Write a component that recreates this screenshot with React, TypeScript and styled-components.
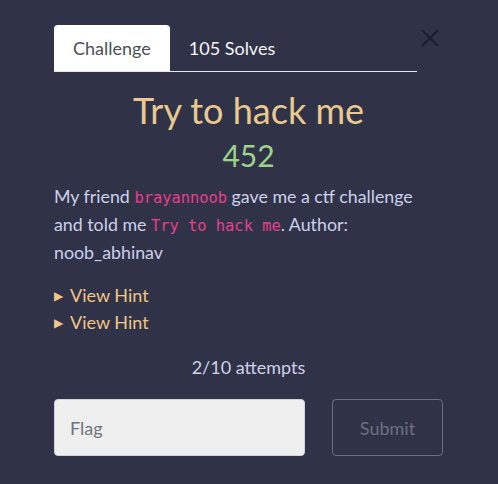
import React from "react";
import styled, { createGlobalStyle } from "styled-components";

const Global = createGlobalStyle`
  html, body { margin: 0; padding: 0; background: #303347; }
  body { font-family: Lato, "Noto Sans", sans-serif; }
  * { box-sizing: border-box; }
`;

const Page = styled.div`
  width: 498px;
  min-height: 484px;
  background: #303347;
  padding: 25px 55px 0 54px;
`;

const Header = styled.div`
  display: flex;
  align-items: flex-start;
`;

const Nav = styled.div`
  flex: 1;
  display: flex;
  border-bottom: 1px solid #e6e7ee;
`;

const Tab = styled.div<{ $active?: boolean }>`
  padding: 0 19px;
  height: 46px;
  display: flex;
  align-items: center;
  font-size: 18px;
  border-radius: 4px 4px 0 0;
  background: ${(p) => (p.$active ? "#ffffff" : "transparent")};
  color: ${(p) => (p.$active ? "#495057" : "#f4f5fa")};
`;

const Close = styled.div`
  width: 26px;
  height: 28px;
  display: flex;
  justify-content: center;
  align-items: center;
  margin-top: -1px;
`;

const Title = styled.h1`
  margin: 16px 0 0;
  text-align: center;
  font-weight: 400;
  font-size: 36px;
  line-height: 44px;
  color: #e9c98f;
`;

const Value = styled.div`
  text-align: center;
  font-size: 30px;
  line-height: 36px;
  margin-top: 5px;
  color: #9fd38c;
`;

const Desc = styled.p`
  margin: 9px 0 0;
  font-size: 17.8px;
  line-height: 28px;
  color: #cdd0ec;
`;

const Code = styled.code`
  font-family: "DejaVu Sans Mono", "Liberation Mono", monospace;
  font-size: 15.4px;
  line-height: 1;
  color: #e83e8c;
`;

const Hints = styled.div`
  margin-top: 16px;
  display: flex;
  flex-direction: column;
`;

const Hint = styled.div`
  display: flex;
  align-items: center;
  font-size: 18px;
  line-height: 27px;
  color: #f1c48a;
`;

const Arrow = styled.span`
  font-size: 12px;
  width: 16px;
  color: #f1c48a;
`;

const Attempts = styled.div`
  text-align: center;
  margin-top: 17px;
  font-size: 18px;
  line-height: 28px;
  color: #cdd0ec;
`;

const Form = styled.div`
  display: flex;
  margin-top: 18px;
  gap: 27px;
`;

const Input = styled.input`
  width: 251px;
  height: 57px;
  border: 1px solid #ced4da;
  border-radius: 4px;
  background: #efefef;
  padding: 0 15px;
  font-family: Lato, sans-serif;
  font-size: 18px;
  color: #495057;
  outline: none;
  &::placeholder { color: #6c757d; }
`;

const Submit = styled.button`
  width: 112px;
  height: 57px;
  border: 1px solid #6c707f;
  border-radius: 4px;
  background: transparent;
  font-family: Lato, sans-serif;
  font-size: 18px;
  color: #6c7080;
`;

export default function App() {
  return (
    <Page>
      <Global />
      <Header>
        <Nav>
          <Tab $active>Challenge</Tab>
          <Tab>105 Solves</Tab>
        </Nav>
        <Close>
          <svg width="20" height="20" viewBox="0 0 20 20">
            <path d="M2 2 L18 18 M18 2 L2 18" stroke="#1d1f2c" strokeWidth="2.2" />
          </svg>
        </Close>
      </Header>
      <Title>Try to hack me</Title>
      <Value>452</Value>
      <Desc>
        My friend <Code>brayannoob</Code> gave me a ctf challenge and told me{" "}
        <Code>Try to hack me</Code>. Author: noob_abhinav
      </Desc>
      <Hints>
        <Hint><Arrow>▶</Arrow>View Hint</Hint>
        <Hint><Arrow>▶</Arrow>View Hint</Hint>
      </Hints>
      <Attempts>2/10 attempts</Attempts>
      <Form>
        <Input placeholder="Flag" />
        <Submit>Submit</Submit>
      </Form>
    </Page>
  );
}
